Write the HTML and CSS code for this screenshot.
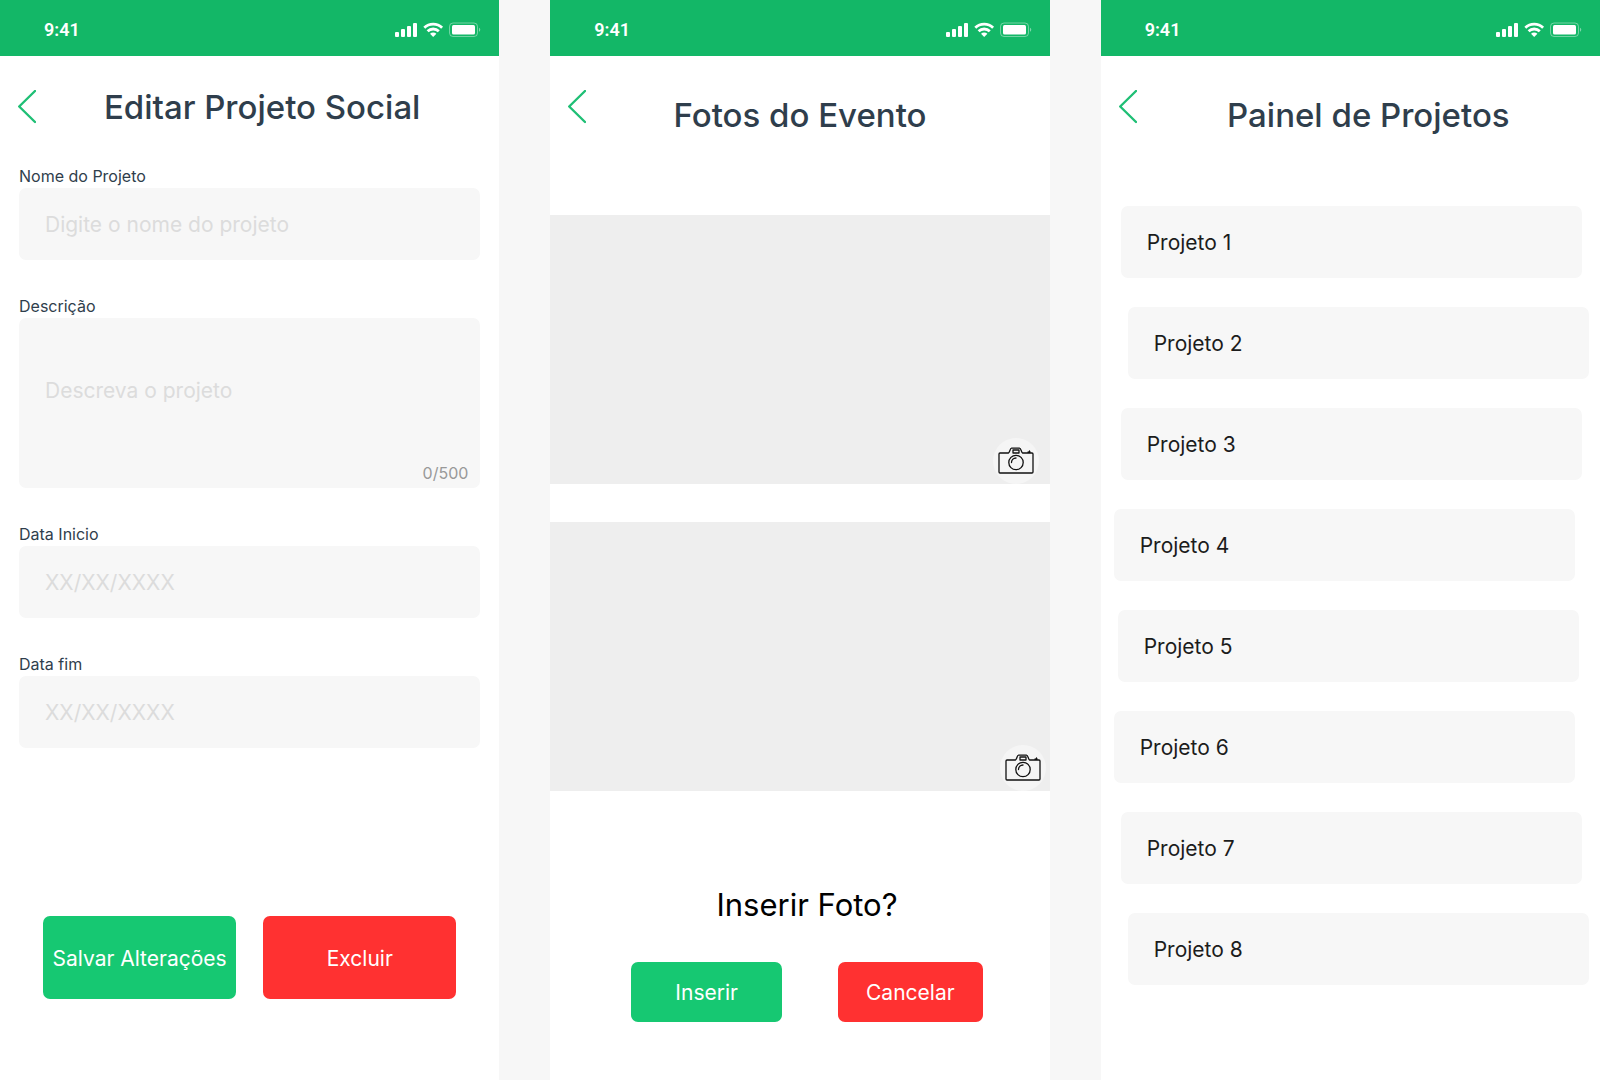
FILE: index.html
```html
<!DOCTYPE html>
<html lang="pt-BR">
<head>
<meta charset="utf-8">
<meta name="viewport" content="width=device-width, initial-scale=1">
<title>Projetos Sociais</title>
<link rel="stylesheet" href="styles.css">
</head>
<body>
<svg class="sprite" aria-hidden="true">
  <symbol id="status-icons" viewBox="0 0 86 16">
    <g fill="#fff">
      <rect x="0" y="10" width="4" height="5" rx="1"/>
      <rect x="6" y="7" width="4" height="8" rx="1"/>
      <rect x="12" y="4" width="4" height="11" rx="1"/>
      <rect x="18" y="1" width="4" height="14" rx="1"/>
      <rect x="57" y="3" width="23" height="9.500" rx="1.500"/>
    </g>
    <g fill="none" stroke="#fff" stroke-width="2.800">
      <path d="M29.300 5.800a12.800 12.800 0 0 1 17.800 0"/>
      <path d="M32.600 9.300a8 8 0 0 1 11.200 0"/>
    </g>
    <path fill="#fff" d="M35 11.800a4.600 4.600 0 0 1 6.400 0L38.200 15z"/>
    <rect x="54.500" y="1" width="28" height="13.500" rx="3.500" fill="none" stroke="#fff" stroke-opacity=".4"/>
    <path d="M84 5.800v4a2.200 2.200 0 0 0 0-4z" fill="#fff" fill-opacity=".45"/>
  </symbol>
  <symbol id="chevron" viewBox="0 0 18 34">
    <path d="M17 1 1.200 16.500 17 32" fill="none" stroke="#1fbf75" stroke-width="2.400" stroke-linecap="round" stroke-linejoin="round"/>
  </symbol>
  <symbol id="camera" viewBox="0 0 36 28">
    <g fill="none" stroke="#111" stroke-width="1.300" stroke-linejoin="round" stroke-linecap="round">
      <path d="M2 6h8.500c1.500-1 1.500-4.800 3-4.800h8c1.600 0 1.600 3.800 3 4.800H34q1 0 1 1v18q0 1-1 1H2q-1 0-1-1V7q0-1 1-1z"/>
      <rect x="15" y="3" width="6" height="3"/>
      <circle cx="18" cy="15.500" r="7.200"/>
      <path d="M13.500 15.500a4.500 4.500 0 0 1 4.500-4.500"/>
    </g>
    <path d="M29.500 6V4.500h1L31.500 3l1 1.500V6z" fill="#111"/>
  </symbol>
</svg>

<main class="board">
  <section class="screen">
    <div class="status"><span>9:41</span><svg class="status-icons"><use href="#status-icons"/></svg></div>
    <header class="header">
      <button class="back" type="button" aria-label="Voltar"><svg><use href="#chevron"/></svg></button>
      <h1 class="title title-edit">Editar Projeto Social</h1>
    </header>
    <form class="form">
      <div class="field">
        <label for="nome">Nome do Projeto</label>
        <input id="nome" type="text" placeholder="Digite o nome do projeto">
      </div>
      <div class="field">
        <label for="descricao">Descrição</label>
        <textarea id="descricao" maxlength="500" placeholder="Descreva o projeto"></textarea>
        <span class="counter">0/500</span>
      </div>
      <div class="field">
        <label for="inicio">Data Inicio</label>
        <input id="inicio" type="text" placeholder="XX/XX/XXXX">
      </div>
      <div class="field">
        <label for="fim">Data fim</label>
        <input id="fim" type="text" placeholder="XX/XX/XXXX">
      </div>
      <div class="form-actions">
        <button class="btn btn-green" type="button">Salvar Alterações</button>
        <button class="btn btn-red" type="button">Excluir</button>
      </div>
    </form>
  </section>

  <section class="screen">
    <div class="status"><span>9:41</span><svg class="status-icons"><use href="#status-icons"/></svg></div>
    <header class="header header-tall">
      <button class="back" type="button" aria-label="Voltar"><svg><use href="#chevron"/></svg></button>
      <h1 class="title title-photos">Fotos do Evento</h1>
    </header>
    <div class="photos">
      <div class="photo"><button class="camera" type="button" aria-label="Adicionar foto"><svg><use href="#camera"/></svg></button></div>
      <div class="photo"><button class="camera camera-edge" type="button" aria-label="Adicionar foto"><svg><use href="#camera"/></svg></button></div>
    </div>
    <div class="confirm">
      <h2 class="question">Inserir Foto?</h2>
      <div class="confirm-actions">
        <button class="btn btn-green" type="button">Inserir</button>
        <button class="btn btn-red" type="button">Cancelar</button>
      </div>
    </div>
  </section>

  <section class="screen">
    <div class="status"><span>9:41</span><svg class="status-icons"><use href="#status-icons"/></svg></div>
    <header class="header header-tall">
      <button class="back" type="button" aria-label="Voltar"><svg><use href="#chevron"/></svg></button>
      <h1 class="title">Painel de Projetos</h1>
    </header>
    <ul class="projects">
      <li><a href="#p1">Projeto 1</a></li>
      <li class="shift-right"><a href="#p2">Projeto 2</a></li>
      <li><a href="#p3">Projeto 3</a></li>
      <li class="shift-left"><a href="#p4">Projeto 4</a></li>
      <li class="shift-mid"><a href="#p5">Projeto 5</a></li>
      <li class="shift-left"><a href="#p6">Projeto 6</a></li>
      <li><a href="#p7">Projeto 7</a></li>
      <li class="shift-right"><a href="#p8">Projeto 8</a></li>
    </ul>
  </section>
</main>
</body>
</html>
```
FILE: styles.css
```css
* { box-sizing: border-box; }

body {
  margin: 0;
  background: #f7f7f7;
  color: #2f3e4c;
  font-family: Inter, "Open Sans", sans-serif;
}

button, input, textarea { font: inherit; border: 0; margin: 0; }
button { padding: 0; cursor: pointer; }

.sprite { position: absolute; width: 0; height: 0; }

.board {
  display: grid;
  grid-template-columns: repeat(3, minmax(0, 1fr));
  gap: 51px;
  min-height: 100vh;
}

.screen { background: #fff; }

/* Status bar */
.status {
  display: flex;
  align-items: center;
  justify-content: space-between;
  height: 56px;
  padding: 4px 18px 0 44px;
  background: #13b767;
  color: #fff;
  font: 600 18px/24px Roboto, sans-serif;
}
.status-icons { width: 86px; height: 16px; }

/* Header */
.header {
  display: flex;
  align-items: flex-start;
  height: 68px;
  padding: 34px 0 0 18px;
}
.back { width: 18px; height: 34px; background: none; }
.back svg { display: block; width: 18px; height: 34px; }
.title {
  flex: 1;
  margin: 0;
  font-size: 33px;
  line-height: 34px;
  font-weight: 500;
  text-align: center;
}
.title-edit { padding-right: 11px; }
.title-photos { padding-right: 36px; }
.header-tall .title { padding-top: 8px; }

/* Form */
.form {
  display: flex;
  flex-direction: column;
  gap: 34px;
  padding: 40px 19px 0;
}
.field { position: relative; display: flex; flex-direction: column; }
.field label { font-size: 16px; line-height: 24px; }
.field input, .field textarea {
  width: 100%;
  height: 72px;
  padding: 0 26px;
  border-radius: 7px;
  background: #f7f7f7;
  font-size: 21px;
  line-height: 30px;
}
.field textarea { display: block; height: 170px; padding-top: 58px; resize: none; }
.field ::placeholder { color: #dcdcdc; opacity: 1; }
.counter {
  position: absolute;
  right: 12px;
  bottom: 3px;
  color: #999;
  font-size: 16px;
  line-height: 24px;
}
.form-actions {
  display: grid;
  grid-template-columns: 1fr 1fr;
  gap: 27px;
  margin-top: 134px;
  padding: 0 24px;
}

/* Buttons */
.btn {
  padding-top: 2px;
  border-radius: 7px;
  color: #fff;
  font-size: 21px;
  line-height: 30px;
  white-space: nowrap;
}
.btn-green { background: #16c872; }
.btn-red { background: #ff3131; }
.form-actions .btn { height: 83px; }
.confirm-actions .btn { height: 60px; }

/* Photos */
.photos { display: grid; gap: 38px; padding-top: 91px; }
.photo { position: relative; height: 269px; background: #eee; }
.camera {
  position: absolute;
  right: 11px;
  bottom: 0;
  display: grid;
  place-items: center;
  width: 46px;
  height: 46px;
  border-radius: 50%;
  background: #f5f5f5;
}
.camera-edge { right: 4px; }
.camera svg { width: 36px; height: 28px; }

.confirm { padding: 92px 67px 0 81px; }
.question {
  margin: 0 0 35px;
  color: #000;
  font-size: 31px;
  line-height: 44px;
  font-weight: 400;
  text-align: center;
}
.confirm-actions { display: grid; grid-template-columns: 151fr 145fr; gap: 56px; }

/* Project list */
.projects {
  display: grid;
  gap: 29px;
  margin: 0;
  padding: 82px 0 0;
  list-style: none;
}
.projects li { padding: 0 18px 0 20px; }
.projects .shift-right { padding: 0 11px 0 27px; }
.projects .shift-left { padding: 0 25px 0 13px; }
.projects .shift-mid { padding: 0 21px 0 17px; }
.projects a {
  display: flex;
  align-items: center;
  height: 72px;
  padding: 2px 26px 0;
  border-radius: 7px;
  background: #f7f7f7;
  color: #1c1c1c;
  font-size: 21px;
  line-height: 30px;
  text-decoration: none;
}
```
